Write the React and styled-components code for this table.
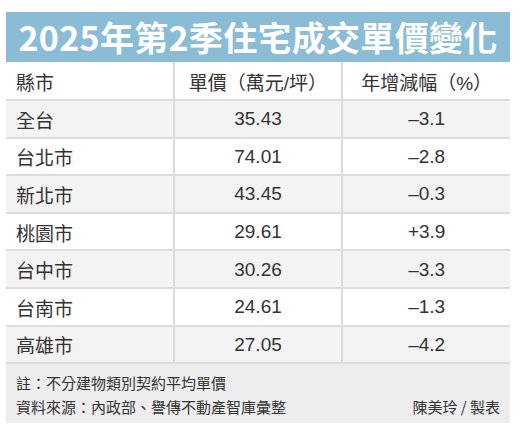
import React from 'react';
import styled, { createGlobalStyle } from 'styled-components';

const GlobalStyle = createGlobalStyle`
  html, body {
    margin: 0;
    padding: 0;
    background: #ffffff;
  }
  body {
    font-family: "Liberation Sans", "Noto Sans CJK TC", sans-serif;
    color: #333333;
  }
`;

const Panel = styled.div`
  width: 504px;
  margin: 12px 0 0 6px;
`;

const Title = styled.h1`
  margin: 0;
  height: 50px;
  background: #8bbcd6;
  color: #ffffff;
  font-family: "Noto Sans CJK TC", sans-serif;
  font-weight: 700;
  font-size: 34px;
  line-height: 50px;
  text-align: center;
  letter-spacing: 0.3px;
`;

const Row = styled.div`
  display: grid;
  grid-template-columns: 1fr 2px 1fr 2px 1fr;
  height: ${(p) => (p.$head ? '37px' : '37.6px')};
  box-sizing: border-box;
  border-top: ${(p) => (p.$head ? 'none' : '2px solid #dcdcdc')};
  background: ${(p) => (p.$shaded ? '#f3f3f3' : '#ffffff')};
  font-size: 19px;
`;

const Divider = styled.div`
  background: #dcdcdc;
`;

const Cell = styled.div`
  display: flex;
  align-items: center;
  justify-content: ${(p) => (p.$left ? 'flex-start' : 'center')};
  padding-left: ${(p) => (p.$left ? '10px' : '0')};
  padding-top: 1px;
`;

const Footer = styled.div`
  background: #ededed;
  border-top: 2px solid #dcdcdc;
  padding: 7px 10px 4px 10px;
  font-family: "Noto Sans CJK TC", sans-serif;
  font-size: 15px;
  line-height: 24px;
  color: #333333;
`;

const FooterLine = styled.div`
  display: flex;
  justify-content: space-between;
`;

const rows = [
  ['全台', '35.43', '–3.1'],
  ['台北市', '74.01', '–2.8'],
  ['新北市', '43.45', '–0.3'],
  ['桃園市', '29.61', '+3.9'],
  ['台中市', '30.26', '–3.3'],
  ['台南市', '24.61', '–1.3'],
  ['高雄市', '27.05', '–4.2'],
];

const App = () => (
  <>
    <GlobalStyle />
    <Panel>
      <Title>2025年第2季住宅成交單價變化</Title>
      <Row $head>
        <Cell $left>縣市</Cell>
        <Divider />
        <Cell>單價（萬元/坪）</Cell>
        <Divider />
        <Cell>年增減幅（%）</Cell>
      </Row>
      {rows.map(([city, price, change], i) => (
        <Row key={city} $shaded={i % 2 === 0}>
          <Cell $left>{city}</Cell>
          <Divider />
          <Cell>{price}</Cell>
          <Divider />
          <Cell>{change}</Cell>
        </Row>
      ))}
      <Footer>
        <FooterLine>註：不分建物類別契約平均單價</FooterLine>
        <FooterLine>
          <span>資料來源：內政部、譽傳不動產智庫彙整</span>
          <span>陳美玲 / 製表</span>
        </FooterLine>
      </Footer>
    </Panel>
  </>
);

export default App;
